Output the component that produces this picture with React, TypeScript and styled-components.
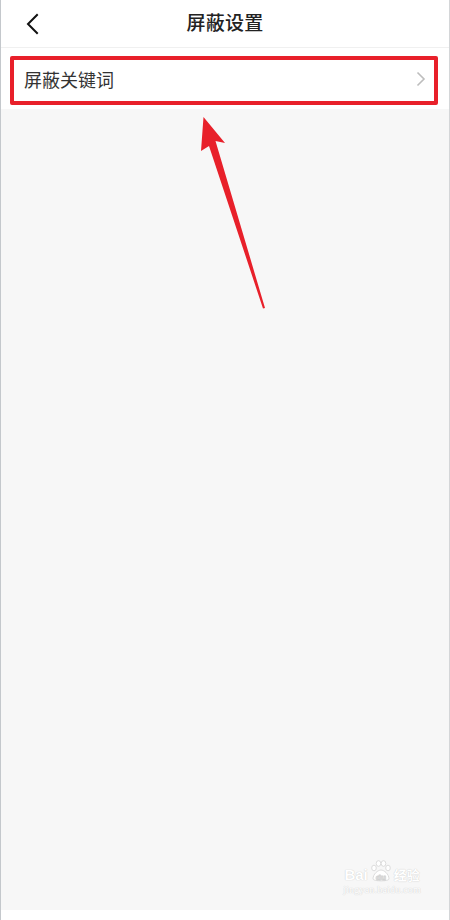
import React from "react";
import styled, { createGlobalStyle } from "styled-components";

const Global = createGlobalStyle`
  html, body { margin: 0; padding: 0; background: #ffffff; }
  body { font-family: "Noto Sans CJK SC", "Noto Sans", sans-serif; }
`;

const Page = styled.div`
  position: relative;
  width: 450px;
  height: 920px;
  box-sizing: border-box;
  border-left: 1px solid #c4c8cc;
  border-right: 1px solid #d4d6d8;
  display: flex;
  flex-direction: column;
  background: #f7f7f7;
  overflow: hidden;
`;

const Header = styled.div`
  height: 47px;
  flex: none;
  background: #fff;
  border-bottom: 1px solid #f0f0f0;
  display: flex;
  align-items: center;
  justify-content: center;
  position: relative;
`;

const BackButton = styled.div`
  position: absolute;
  left: 24px;
  top: 13px;
  width: 16px;
  height: 22px;
  display: flex;
`;

const Title = styled.div`
  font-size: 19px;
  font-weight: 500;
  color: #222;
  letter-spacing: 0.3px;
  margin-top: -4px;
`;

const List = styled.div`
  background: #fff;
  padding-top: 8px;
  flex: none;
`;

const Row = styled.div`
  height: 53px;
  padding: 0 23px 0 23px;
  display: flex;
  align-items: center;
  justify-content: space-between;
  & > * { margin-top: -7px; }
`;

const RowLabel = styled.span`
  font-size: 18px;
  color: #333;
`;

const Body = styled.div`
  flex: 1;
  position: relative;
  background: #f7f7f7;
`;

const FooterStrip = styled.div`
  height: 10px;
  flex: none;
  background: #fff;
`;

const Highlight = styled.div`
  position: absolute;
  left: 9px;
  top: 56px;
  width: 428px;
  height: 49px;
  box-sizing: border-box;
  border: 4px solid #e8202a;
  border-radius: 2px;
  pointer-events: none;
`;

const ArrowSvg = styled.svg`
  position: absolute;
  left: 0;
  top: 0;
  pointer-events: none;
`;

const Watermark = styled.div`
  position: absolute;
  right: 28px;
  bottom: 14px;
  display: flex;
  flex-direction: column;
  align-items: center;
  color: #ffffff;
  text-shadow: 0 0 1px #cfcfcf, 0 0 1px #d8d8d8;
  pointer-events: none;
`;

const WmTop = styled.div`
  display: flex;
  align-items: flex-end;
  font-family: "Liberation Sans", Arial, sans-serif;
  font-weight: 700;
  font-size: 15px;
  line-height: 15px;
  gap: 1px;
`;

const WmCn = styled.span`
  font-family: "Noto Sans CJK SC", sans-serif;
  font-size: 13px;
  line-height: 14px;
  font-weight: 700;
`;

const WmUrl = styled.div`
  font-family: "Liberation Serif", serif;
  font-size: 10px;
  line-height: 12px;
  margin-top: 2px;
  letter-spacing: 0.2px;
`;

const Paw = () => (
  <svg width="24" height="22" viewBox="0 0 24 22">
    <g fill="#fff" stroke="#d4d4d4" strokeWidth="0.8">
      <ellipse cx="5" cy="8" rx="2.3" ry="2.8" />
      <ellipse cx="9.5" cy="3.5" rx="2.3" ry="2.8" />
      <ellipse cx="14.5" cy="3.5" rx="2.3" ry="2.8" />
      <ellipse cx="19" cy="8" rx="2.3" ry="2.8" />
      <path d="M4 19 C4 14 9 10 12 10 C15 10 20 14 20 19 C20 21.5 4 21.5 4 19 Z" />
    </g>
    <text x="12" y="19.5" textAnchor="middle" fontSize="8" fontFamily="Liberation Sans, sans-serif" fontWeight="700" fill="#fff" stroke="#d0d0d0" strokeWidth="0.4">du</text>
  </svg>
);

export default function App() {
  return (
    <>
      <Global />
      <Page>
        <Header>
          <BackButton>
            <svg width="16" height="22" viewBox="0 0 16 22">
              <path d="M12 2 L3 11 L12 20" fill="none" stroke="#111" strokeWidth="2" strokeLinecap="square" />
            </svg>
          </BackButton>
          <Title>屏蔽设置</Title>
        </Header>
        <List>
          <Row>
            <RowLabel>屏蔽关键词</RowLabel>
            <svg width="10" height="16" viewBox="0 0 10 16">
              <path d="M1.5 1.5 L8 8 L1.5 14.5" fill="none" stroke="#bdbdbd" strokeWidth="1.6" />
            </svg>
          </Row>
        </List>
        <Body>
          <Watermark>
            <WmTop>
              <span>Bai</span>
              <Paw />
              <WmCn>经验</WmCn>
            </WmTop>
            <WmUrl>jingyan.baidu.com</WmUrl>
          </Watermark>
        </Body>
        <FooterStrip />
        <Highlight />
        <ArrowSvg width="450" height="320" viewBox="0 0 450 320">
          <path
            d="M202.5 117 L224 143 L214.5 141 L264 308 L262 308.5 L208 146 L200 151 Z"
            fill="#e8202a"
          />
        </ArrowSvg>
      </Page>
    </>
  );
}
